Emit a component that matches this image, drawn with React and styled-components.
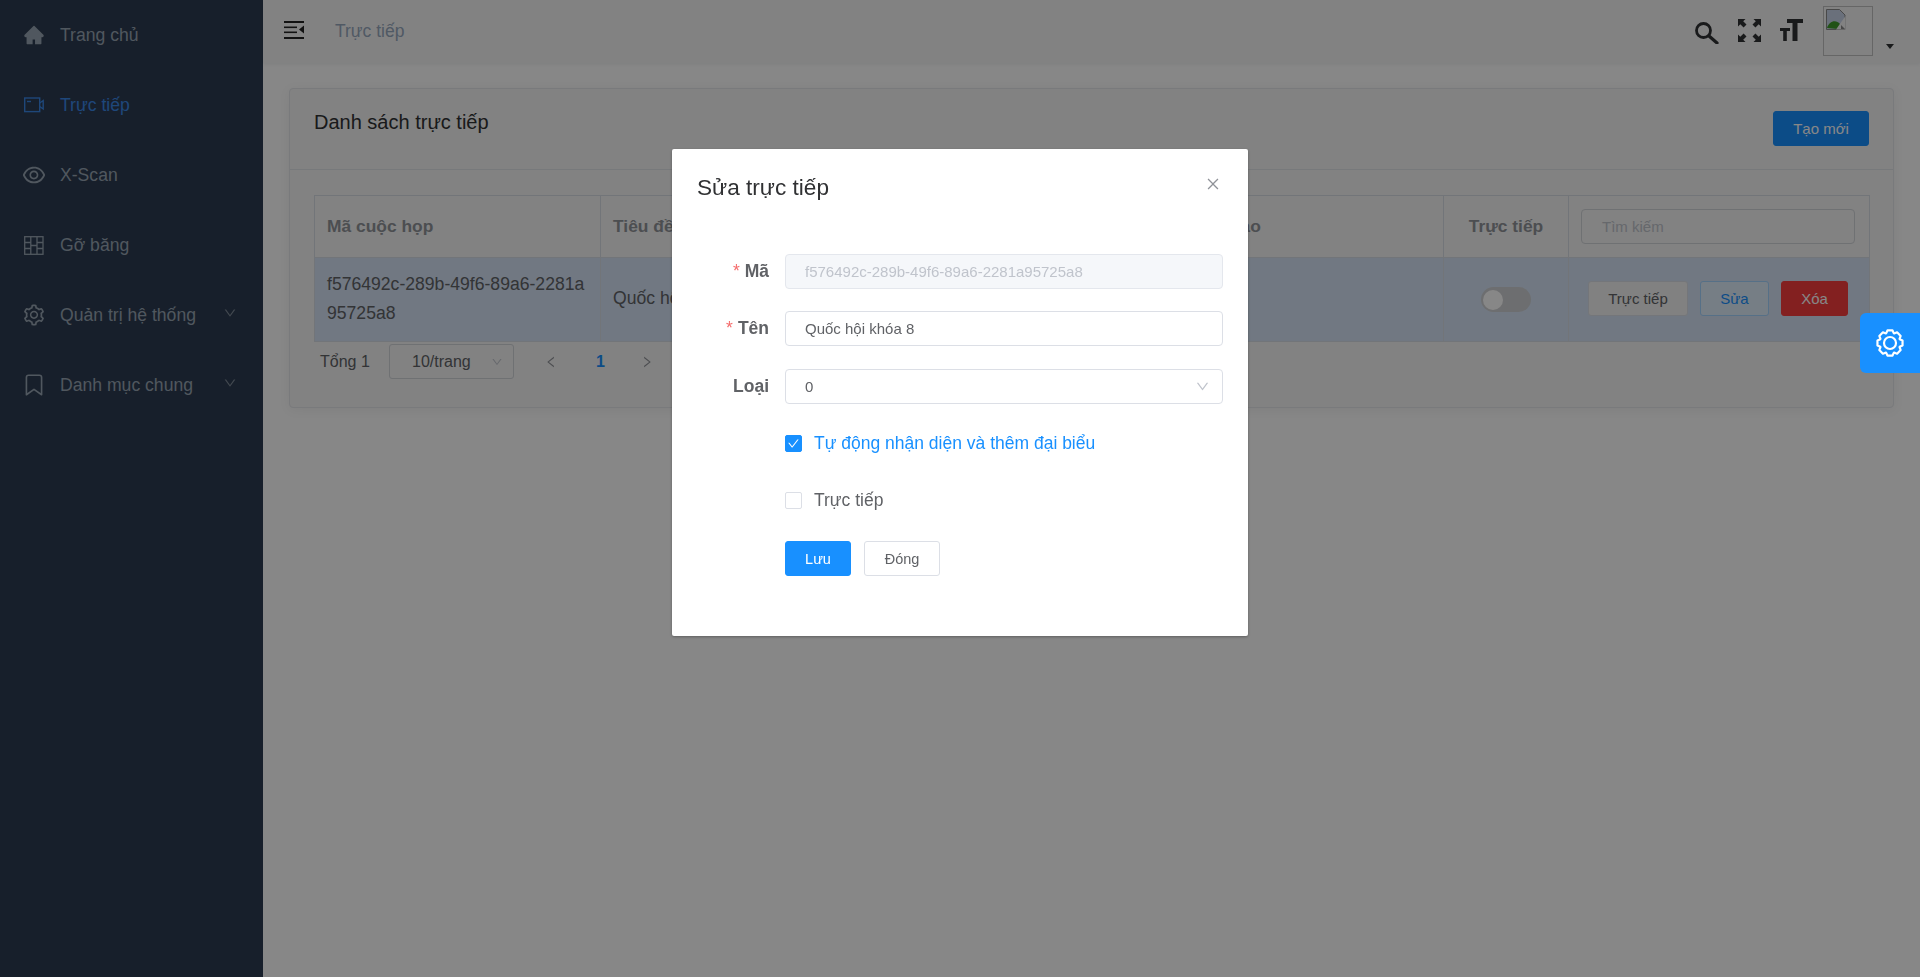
import React from 'react';
import styled, { createGlobalStyle } from 'styled-components';
import {
  AiFillHome,
  AiOutlineEye,
  AiOutlineSetting,
  AiOutlineDown,
  AiOutlineLeft,
  AiOutlineRight,
  AiOutlineClose,
  AiOutlineCheck,
} from 'react-icons/ai';
import { FiBookmark } from 'react-icons/fi';

const GlobalStyle = createGlobalStyle`
  * { box-sizing: border-box; }
  html, body { margin: 0; padding: 0; height: 100%; }
  body {
    font-family: "Liberation Sans", Arial, sans-serif;
    background: #fff;
    overflow: hidden;
  }
`;

const Layout = styled.div`
  display: flex;
  width: 100%;
  height: 977px;
`;

const Sidebar = styled.aside`
  width: 263px;
  flex: none;
  background: #2d3c51;
`;

const MenuItem = styled.div`
  height: 70px;
  display: flex;
  align-items: center;
  padding: 0 24px;
  font-size: 17.6px;
  color: ${(props) => (props.$active ? '#3a86e6' : '#98a5b3')};
`;

const MenuIcon = styled.span`
  width: 20px;
  height: 20px;
  margin-right: 16px;
  display: flex;
  align-items: center;
  justify-content: center;
  font-size: ${(props) => props.$size || 20}px;

  svg {
    flex: none;
  }
`;

const MenuLabel = styled.span`
  flex: 1;
`;

const MenuArrow = styled(AiOutlineDown)`
  font-size: 14px;
  margin: -5px 2px 0 0;
  color: #7f8b99;
`;

const BookmarkIcon = styled(FiBookmark)`
  stroke-width: 1.5;
`;

const Main = styled.main`
  flex: 1;
  min-width: 0;
`;

const TopBar = styled.header`
  height: 63px;
  background: #f6f6f6;
  box-shadow: 0 1px 4px rgba(0, 21, 41, 0.08);
  display: flex;
  align-items: center;
  padding: 0 0 0 21px;
  color: #303133;

  > svg {
    margin-bottom: 3px;
  }
`;

const Crumb = styled.span`
  margin-left: 31px;
  margin-bottom: 1px;
  font-size: 17.5px;
  color: #97a8be;
`;

const TopTools = styled.div`
  margin-left: auto;
  display: flex;
  align-items: center;
  gap: 19px;
  height: 100%;
  color: #303133;

  > svg {
    flex: none;
    margin-bottom: 3px;
  }

  > svg:first-child {
    margin-bottom: 0;
  }
`;

const Account = styled.div`
  display: flex;
  align-items: flex-start;
  height: 100%;
  padding-top: 6px;
`;

const Avatar = styled.div`
  width: 50px;
  height: 50px;
  border: 1px solid #c0c0c0;
  padding: 2px;
`;

const Caret = styled.span`
  width: 0;
  height: 0;
  border: 4px solid transparent;
  border-top: 5px solid #303133;
  margin: 38px 26px 0 13px;
`;

const Content = styled.div`
  padding: 25px 26px 0 26px;
`;

const Card = styled.section`
  background: #f5f5f5;
  border: 1px solid #e4e6ea;
  border-radius: 4px;
  box-shadow: 0 2px 12px rgba(0, 0, 0, 0.06);
`;

const CardHead = styled.div`
  height: 81px;
  border-bottom: 1px solid #e1e4e8;
  display: flex;
  justify-content: space-between;
  padding: 22px 24px 0 24px;
`;

const CardTitle = styled.h2`
  margin: -1px 0 0;
  font-weight: 400;
  font-size: 20px;
  line-height: 24px;
  color: #303133;
`;

const PrimaryButton = styled.button`
  height: 35px;
  border-radius: 3px;
  border: 1px solid #1890ff;
  background: #1890ff;
  color: #fff;
  font: inherit;
  font-size: 15px;
  padding: 0;
  width: ${(props) => props.$w}px;
`;

const CardBody = styled.div`
  padding: 25px 24px 0 24px;
  height: 237px;
`;

const Table = styled.table`
  width: 1555px;
  table-layout: fixed;
  border-collapse: collapse;
`;

const Th = styled.th`
  height: 62px;
  border: 1px solid #d8dee5;
  padding: 0 12px 1px;
  text-align: ${(props) => props.$align || 'left'};
  font-size: 17.4px;
  color: #909399;
`;

const Td = styled.td`
  height: 84px;
  border: 1px solid #d8dee5;
  padding: 0 12px 2px;
  font-size: 17.6px;
  line-height: 29px;
  color: #606266;
  background: #d5e3f5;
  word-break: break-all;
  text-align: ${(props) => props.$align || 'left'};
`;

const SearchInput = styled.div`
  height: 35px;
  margin-right: 2px;
  border: 1px solid #d2d5da;
  border-radius: 4px;
  display: flex;
  align-items: center;
  padding-left: 20px;
  font-size: 15px;
  font-weight: 400;
  color: #c0c4cc;
`;

const Switch = styled.span`
  display: inline-block;
  width: 50px;
  height: 25px;
  border-radius: 13px;
  background: #cfd0d3;
  padding: 3px 2px;
  vertical-align: middle;

  &::before {
    content: '';
    display: block;
    width: 20px;
    height: 20px;
    border-radius: 50%;
    background: #fff;
  }
`;

const Actions = styled.div`
  display: flex;
  gap: 12px;
  padding-left: 7px;
`;

const ActionButton = styled.button`
  height: 35px;
  width: ${(props) => props.$w}px;
  padding: 0;
  border-radius: 3px;
  font: inherit;
  font-size: 15px;
  border: 1px solid ${(props) => props.$border};
  background: ${(props) => props.$bg};
  color: ${(props) => props.$color};
`;

const Pager = styled.div`
  display: flex;
  align-items: center;
  height: 35px;
  margin-top: 2px;
  font-size: 16px;
  color: #606266;
`;

const Total = styled.span`
  margin-left: 6px;
  width: 69px;
`;

const PageSize = styled.div`
  width: 125px;
  height: 35px;
  border: 1px solid #d2d5da;
  border-radius: 3px;
  display: flex;
  align-items: center;
  justify-content: space-between;
  padding: 0 10px 0 22px;
  color: #606266;

  svg {
    font-size: 12px;
    color: #c0c4cc;
  }
`;

const PageArrow = styled.span`
  display: flex;
  font-size: 14px;
  color: #909399;
  margin-left: ${(props) => props.$ml}px;
`;

const PageNumber = styled.b`
  color: #1890ff;
  margin-left: 38px;
`;

const Overlay = styled.div`
  position: fixed;
  inset: 0;
  background: rgba(0, 0, 0, 0.47);
  display: flex;
  justify-content: center;
  padding-top: 149px;
`;

const Modal = styled.div`
  width: 576px;
  height: 487px;
  background: #fff;
  border-radius: 2px;
  box-shadow: 0 1px 3px rgba(0, 0, 0, 0.3);
  padding: 26px 25px 0 25px;
`;

const ModalHead = styled.div`
  display: flex;
  justify-content: space-between;
  height: 79px;
`;

const ModalTitle = styled.h3`
  margin: 0;
  font-size: 22.6px;
  line-height: 26px;
  font-weight: 400;
  color: #303133;
`;

const CloseIcon = styled(AiOutlineClose)`
  font-size: 16px;
  color: #909399;
  margin: 1px 2px 0 0;
`;

const FormRow = styled.div`
  display: flex;
  align-items: center;
  margin-bottom: ${(props) => props.$mb}px;
`;

const Label = styled.label`
  width: 72px;
  margin-right: 16px;
  text-align: right;
  font-size: 17.5px;
  font-weight: 700;
  color: #606266;
  flex: none;
`;

const Required = styled.span`
  color: #f56c6c;
  font-weight: 400;
  margin-right: 5px;
`;

const Field = styled.div`
  width: 438px;
  height: 35px;
  border: 1px solid ${(props) => (props.$disabled ? '#e4e7ed' : '#dcdfe6')};
  border-radius: 4px;
  background: ${(props) => (props.$disabled ? '#f5f7fa' : '#fff')};
  color: ${(props) => (props.$disabled ? '#c0c4cc' : '#606266')};
  display: flex;
  align-items: center;
  justify-content: space-between;
  padding: 0 12px 0 19px;
  font-size: 15px;

  svg {
    font-size: 15px;
    color: #c0c4cc;
  }
`;

const CheckRow = styled.div`
  display: flex;
  align-items: center;
  height: 18px;
  padding-left: 88px;
  font-size: 17.5px;
  margin-bottom: ${(props) => props.$mb}px;
  color: ${(props) => (props.$checked ? '#1890ff' : '#606266')};
`;

const CheckBox = styled.span`
  width: 17px;
  height: 17px;
  flex: none;
  display: flex;
  align-items: center;
  justify-content: center;
  margin-right: 12px;
  border-radius: 2px;
  border: 1px solid ${(props) => (props.$checked ? '#1890ff' : '#dcdfe6')};
  background: ${(props) => (props.$checked ? '#1890ff' : '#fff')};
  color: #fff;
  font-size: 13px;
`;

const ButtonRow = styled.div`
  display: flex;
  gap: 13px;
  padding-left: 88px;
`;

const GhostButton = styled.button`
  height: 35px;
  width: 76px;
  padding: 0;
  border: 1px solid #dcdfe6;
  border-radius: 3px;
  background: #fff;
  font: inherit;
  font-size: 14.5px;
  color: #606266;
`;

const SaveButton = styled(PrimaryButton)`
  font-size: 14.5px;
`;

const SettingsTab = styled.div`
  position: fixed;
  top: 313px;
  right: 0;
  width: 60px;
  height: 60px;
  background: #1890ff;
  border-radius: 6px 0 0 6px;
  display: flex;
  align-items: center;
  justify-content: center;
`;

const VideoIcon = () => (
  <svg width="20" height="16" viewBox="0 0 20 16" fill="none" stroke="currentColor" strokeWidth="1.4">
    <rect x="0.7" y="1" width="15" height="13.6" />
    <path d="M3 4.5h4" />
    <path d="M15.7 6l3.5-2.5v8.500l-3.500-2.500" />
  </svg>
);

const GridIcon = () => (
  <svg width="20" height="19" viewBox="0 0 20 19" fill="none" stroke="currentColor" strokeWidth="1.3">
    <rect x="0.7" y="0.7" width="18.3" height="17.6" />
    <path d="M6.800 0.700v17.600M13 0.700v17.600M0.700 6.500h6.100M0.700 12.500h6.100M13 6.500h6M13 12.500h6M6.800 9.500h6.200" />
  </svg>
);

const CollapseIcon = () => (
  <svg width="20" height="18" viewBox="0 0 20 18" fill="#222">
    <rect x="0" y="0" width="20" height="2" />
    <rect x="0" y="5.500" width="13" height="1.600" />
    <rect x="0" y="10.500" width="13" height="1.600" />
    <rect x="0" y="16" width="20" height="2" />
    <path d="M20 4.500v8L15 8.500z" />
  </svg>
);

const SearchIcon = () => (
  <svg width="24" height="24" viewBox="0 0 24 24" fill="none" stroke="currentColor">
    <circle cx="8.500" cy="10.500" r="7" strokeWidth="2.800" />
    <path d="M14 16l8 7" strokeWidth="3.200" strokeLinecap="round" />
  </svg>
);

const FullscreenIcon = () => (
  <svg width="23" height="23" viewBox="0 0 23 23" fill="currentColor">
    <path d="M0 0h7.500L5.200 2.300 8.500 5.600 5.600 8.500 2.300 5.200 0 7.500z" />
    <path d="M23 0v7.500L20.700 5.200 17.400 8.500 14.500 5.600 17.800 2.300 15.500 0z" />
    <path d="M0 23v-7.500l2.300 2.300 3.300-3.300 2.900 2.900-3.300 3.300L7.500 23z" />
    <path d="M23 23h-7.500l2.300-2.300-3.300-3.300 2.900-2.900 3.300 3.300 2.300-2.300z" />
  </svg>
);

const FontSizeIcon = () => (
  <svg width="24" height="23" viewBox="0 0 24 23" fill="currentColor">
    <path d="M7 0h16v4h-5.500v18h-5V4H7z" />
    <path d="M0 9h10v3H6.800v10H3.200V12H0z" />
  </svg>
);

const BrokenImage = () => (
  <svg width="20" height="21" viewBox="0 0 20 21">
    <path d="M0.500 0.500h13l5.500 5.500v14.500h-18.500z" fill="#c8d4e8" stroke="#8a8a8a" />
    <path d="M1 19c2-7 9-9 13-4l-2 5z" fill="#3f9b2a" />
    <path d="M19.500 7L10 20.500h9.500z" fill="#f6f6f6" />
    <path d="M15 16l4 4h-4z" fill="#8a8a8a" />
  </svg>
);

// eight rounded teeth around a ring, as on the blue settings tab
const gearPath = (() => {
  const teeth = 8;
  const points = [];
  for (let i = 0; i < teeth; i += 1) {
    const a = (i * 2 * Math.PI) / teeth;
    [
      [-0.38, 10.4],
      [-0.2, 12.8],
      [0.2, 12.8],
      [0.38, 10.4],
    ].forEach(([da, r]) => {
      const x = 14 + r * Math.sin(a + da);
      const y = 14 - r * Math.cos(a + da);
      points.push(`${x.toFixed(2)} ${y.toFixed(2)}`);
    });
  }
  return `M${points.join('L')}Z`;
})();

const TabGear = () => (
  <svg width="28" height="28" viewBox="0 0 28 28" fill="none" stroke="#fff" strokeWidth="2.200" strokeLinejoin="round">
    <path d={gearPath} />
    <circle cx="14" cy="14" r="6" />
  </svg>
);

const menu = [
  { label: 'Trang chủ', icon: <AiFillHome />, size: 22 },
  { label: 'Trực tiếp', icon: <VideoIcon /> },
  { label: 'X-Scan', icon: <AiOutlineEye />, size: 26 },
  { label: 'Gỡ băng', icon: <GridIcon /> },
  { label: 'Quản trị hệ thống', icon: <AiOutlineSetting />, size: 24, arrow: true },
  { label: 'Danh mục chung', icon: <BookmarkIcon />, size: 26, arrow: true },
];

const App = () => (
  <>
    <GlobalStyle />
    <Layout>
      <Sidebar>
        {menu.map((item) => (
          <MenuItem key={item.label} $active={item.label === 'Trực tiếp'}>
            <MenuIcon $size={item.size}>{item.icon}</MenuIcon>
            <MenuLabel>{item.label}</MenuLabel>
            {item.arrow && <MenuArrow />}
          </MenuItem>
        ))}
      </Sidebar>
      <Main>
        <TopBar>
          <CollapseIcon />
          <Crumb>Trực tiếp</Crumb>
          <TopTools>
            <SearchIcon />
            <FullscreenIcon />
            <FontSizeIcon />
            <Account>
              <Avatar>
                <BrokenImage />
              </Avatar>
              <Caret />
            </Account>
          </TopTools>
        </TopBar>
        <Content>
          <Card>
            <CardHead>
              <CardTitle>Danh sách trực tiếp</CardTitle>
              <PrimaryButton $w={96}>Tạo mới</PrimaryButton>
            </CardHead>
            <CardBody>
              <Table>
                <colgroup>
                  <col style={{ width: 286 }} />
                  <col style={{ width: 564 }} />
                  <col style={{ width: 279 }} />
                  <col style={{ width: 125 }} />
                  <col style={{ width: 301 }} />
                </colgroup>
                <thead>
                  <tr>
                    <Th>Mã cuộc họp</Th>
                    <Th>Tiêu đề</Th>
                    <Th>Người tạo</Th>
                    <Th $align="center">Trực tiếp</Th>
                    <Th>
                      <SearchInput>Tìm kiếm</SearchInput>
                    </Th>
                  </tr>
                </thead>
                <tbody>
                  <tr>
                    <Td>f576492c-289b-49f6-89a6-2281a95725a8</Td>
                    <Td>Quốc hội khóa 8</Td>
                    <Td />
                    <Td $align="center">
                      <Switch />
                    </Td>
                    <Td>
                      <Actions>
                        <ActionButton $w={100} $border="#dcdfe6" $bg="#f3f3f3" $color="#606266">
                          Trực tiếp
                        </ActionButton>
                        <ActionButton $w={69} $border="#a3d3ff" $bg="#dfeefc" $color="#1890ff">
                          Sửa
                        </ActionButton>
                        <ActionButton $w={67} $border="#f83d3d" $bg="#f83d3d" $color="#fff">
                          Xóa
                        </ActionButton>
                      </Actions>
                    </Td>
                  </tr>
                </tbody>
              </Table>
              <Pager>
                <Total>Tổng 1</Total>
                <PageSize>
                  10/trang
                  <AiOutlineDown />
                </PageSize>
                <PageArrow $ml={30}>
                  <AiOutlineLeft />
                </PageArrow>
                <PageNumber>1</PageNumber>
                <PageArrow $ml={35}>
                  <AiOutlineRight />
                </PageArrow>
              </Pager>
            </CardBody>
          </Card>
        </Content>
      </Main>
    </Layout>
    <Overlay>
      <Modal>
        <ModalHead>
          <ModalTitle>Sửa trực tiếp</ModalTitle>
          <CloseIcon />
        </ModalHead>
        <FormRow $mb={22}>
          <Label>
            <Required>*</Required>Mã
          </Label>
          <Field $disabled>f576492c-289b-49f6-89a6-2281a95725a8</Field>
        </FormRow>
        <FormRow $mb={23}>
          <Label>
            <Required>*</Required>Tên
          </Label>
          <Field>Quốc hội khóa 8</Field>
        </FormRow>
        <FormRow $mb={30}>
          <Label>Loại</Label>
          <Field>
            0
            <AiOutlineDown />
          </Field>
        </FormRow>
        <CheckRow $checked $mb={39}>
          <CheckBox $checked>
            <AiOutlineCheck />
          </CheckBox>
          Tự động nhận diện và thêm đại biểu
        </CheckRow>
        <CheckRow $mb={32}>
          <CheckBox />
          Trực tiếp
        </CheckRow>
        <ButtonRow>
          <SaveButton $w={66}>Lưu</SaveButton>
          <GhostButton>Đóng</GhostButton>
        </ButtonRow>
      </Modal>
    </Overlay>
    <SettingsTab>
      <TabGear />
    </SettingsTab>
  </>
);

export default App;
